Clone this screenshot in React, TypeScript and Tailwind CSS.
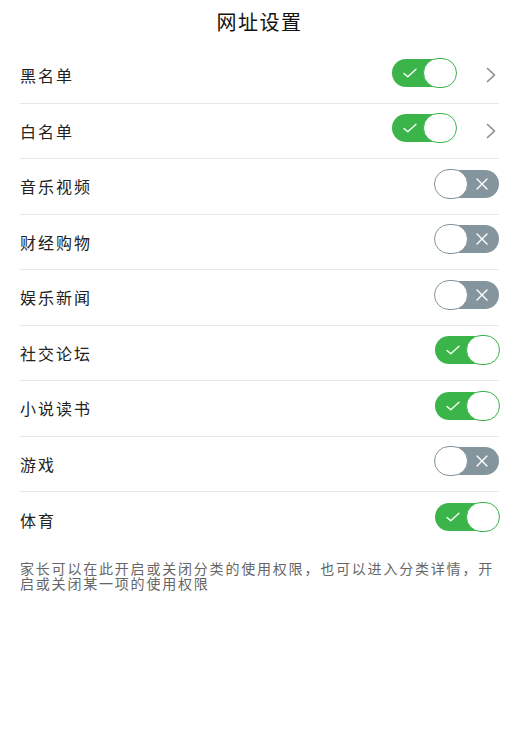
import React, { useState } from 'react';

interface Item {
  name: string;
  on: boolean;
  arrow?: boolean;
}

const initialItems: Item[] = [
  { name: '黑名单', on: true, arrow: true },
  { name: '白名单', on: true, arrow: true },
  { name: '音乐视频', on: false },
  { name: '财经购物', on: false },
  { name: '娱乐新闻', on: false },
  { name: '社交论坛', on: true },
  { name: '小说读书', on: true },
  { name: '游戏', on: false },
  { name: '体育', on: true },
];

function Toggle({ on, onClick }: { on: boolean; onClick: () => void }) {
  return (
    <button
      onClick={onClick}
      className={`relative h-[28px] w-[64px] rounded-full shrink-0 ${on ? 'bg-[#3bb54a]' : 'bg-[#84959e]'}`}
    >
      {on ? (
        <svg className="absolute left-[11px] top-[9px]" width="14" height="10" viewBox="0 0 14 10" fill="none">
          <path d="M1 5.5 L4.8 8.8 L13 1.2" stroke="#ffffff" strokeWidth="1.3" strokeLinecap="round" strokeLinejoin="round" />
        </svg>
      ) : (
        <svg className="absolute right-[11px] top-[8px]" width="12" height="12" viewBox="0 0 12 12" fill="none">
          <path d="M1 1 L11 11 M11 1 L1 11" stroke="#ffffff" strokeWidth="1.4" strokeLinecap="round" />
        </svg>
      )}
      <span
        className={`absolute top-[-1px] h-[30px] w-[34px] rounded-full bg-white border ${on ? 'right-[-1px] border-[#3bb54a]' : 'left-[-1px] border-[#84959e]'}`}
      />
    </button>
  );
}

export default function App() {
  const [items, setItems] = useState<Item[]>(initialItems);

  const toggle = (i: number) => {
    setItems(items.map((it, idx) => (idx === i ? { ...it, on: !it.on } : it)));
  };

  return (
    <div className="min-h-screen bg-white" style={{ fontFamily: '"Noto Sans CJK SC", "Noto Sans", sans-serif' }}>
      <div className="h-[48px] flex items-center justify-center pb-[4px]">
        <h1 className="text-[20px] text-[#111] tracking-[1.5px]">网址设置</h1>
      </div>

      <div className="px-[20px]">
        {items.map((item, i) => (
          <div
            key={item.name}
            className={`h-[55.5px] flex items-center ${i < items.length - 1 ? 'border-b border-[#e8e8e8]' : ''}`}
          >
            <span className="flex-1 text-[16px] text-[#222] tracking-[2px]">{item.name}</span>
            <div className={item.arrow ? 'mr-[30px]' : ''}>
              <Toggle on={item.on} onClick={() => toggle(i)} />
            </div>
            {item.arrow && (
              <svg width="10" height="16" viewBox="0 0 10 16" fill="none" className="mr-[3px]">
                <path d="M1.5 1.5 L8.5 8 L1.5 14.5" stroke="#8a8a8a" strokeWidth="1.6" strokeLinecap="round" strokeLinejoin="round" />
              </svg>
            )}
          </div>
        ))}
      </div>

      <p className="px-[20px] mt-[13px] text-[14px] leading-[15px] text-[#666] tracking-[1.8px]">
        家长可以在此开启或关闭分类的使用权限，也可以进入分类详情，开启或关闭某一项的使用权限
      </p>
    </div>
  );
}
